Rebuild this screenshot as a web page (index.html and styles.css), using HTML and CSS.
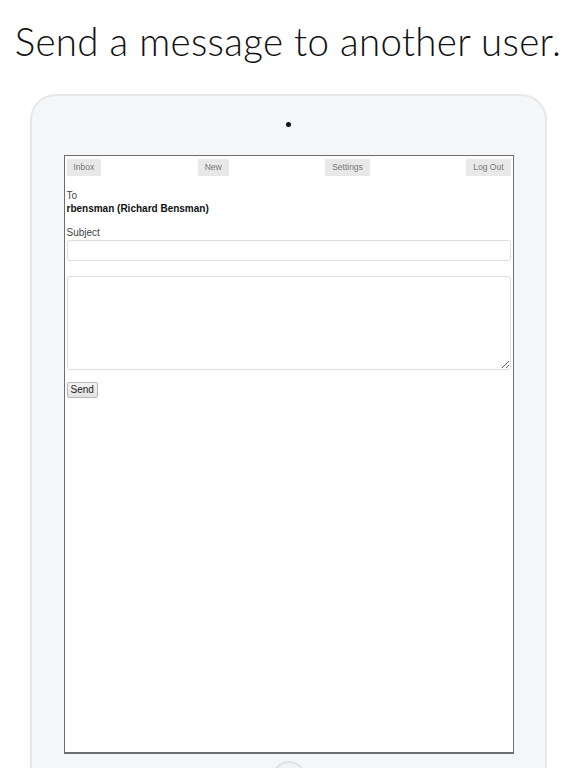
FILE: index.html
```html
<!DOCTYPE html>
<html>
<head>
<meta charset="utf-8">
<link rel="stylesheet" href="styles.css">
</head>
<body>
<h1 class="title">Send a message to another user.</h1>
<div class="device">
  <div class="camera"></div>
  <div class="screen">
    <nav class="nav">
      <span class="nav-btn">Inbox</span>
      <span class="nav-btn">New</span>
      <span class="nav-btn">Settings</span>
      <span class="nav-btn">Log Out</span>
    </nav>
    <form class="form">
      <div class="label">To</div>
      <div class="recipient">rbensman (Richard Bensman)</div>
      <div class="label subject-label">Subject</div>
      <input class="subject" type="text">
      <textarea class="body-text"></textarea>
      <button class="send" type="button">Send</button>
    </form>
  </div>
  <div class="home"></div>
</div>
</body>
</html>
```
FILE: styles.css
```css
html, body {
  margin: 0;
  padding: 0;
  background: #ffffff;
}
body {
  width: 576px;
  height: 768px;
  overflow: hidden;
  font-family: "Liberation Sans", Arial, sans-serif;
}
.title {
  margin: 0;
  padding-top: 18px;
  height: 94px;
  box-sizing: border-box;
  text-align: center;
  font-family: "Lato", "Open Sans", sans-serif;
  font-weight: 300;
  font-size: 38.5px;
  line-height: 46px;
  color: #111111;
  letter-spacing: 0.3px;
}
.device {
  margin-left: 30px;
  width: 517px;
  height: 760px;
  box-sizing: border-box;
  border: 2px solid #e6e7e9;
  border-radius: 26px;
  background: #f5f6f8;
  display: flex;
  flex-direction: column;
  align-items: center;
}
.camera {
  margin-top: 26px;
  width: 5px;
  height: 5px;
  border-radius: 50%;
  background: #111111;
}
.screen {
  margin-top: 28px;
  width: 450px;
  height: 599px;
  box-sizing: border-box;
  border: 1px solid #6e6e6e;
  border-bottom-width: 2px;
  background: #ffffff;
  padding: 3px 2px 0 2px;
}
.nav {
  display: flex;
  justify-content: space-between;
}
.nav-btn {
  height: 17px;
  line-height: 17px;
  padding: 0 7px;
  background: #e8e8e8;
  color: #777777;
  font-size: 8.5px;
}
.form {
  display: flex;
  flex-direction: column;
  align-items: flex-start;
  margin: 0;
}
.label {
  font-size: 10px;
  line-height: 12px;
  color: #444444;
  margin-top: 14px;
}
.recipient {
  font-size: 10px;
  line-height: 12px;
  font-weight: bold;
  color: #111111;
  margin-top: 1px;
}
.subject-label {
  margin-top: 12px;
}
.subject {
  margin: 1px 0 0 0;
  width: 100%;
  height: 21px;
  box-sizing: border-box;
  border: 1px solid #dddddd;
  border-radius: 3px;
  background: #ffffff;
  padding: 0;
}
.body-text {
  margin: 15px 0 0 0;
  width: 100%;
  height: 94px;
  box-sizing: border-box;
  border: 1px solid #dddddd;
  border-radius: 3px;
  background: #ffffff;
  padding: 0;
  resize: vertical;
}
.send {
  margin-top: 12px;
  height: 16px;
  padding: 0 3px;
  font-family: "Liberation Sans", Arial, sans-serif;
  font-size: 10px;
  line-height: 14px;
  color: #222222;
  background: linear-gradient(#f4f4f4, #e2e2e2);
  border: 1px solid #b8b8b8;
  border-radius: 2px;
}
.home {
  margin-top: 7px;
  width: 34px;
  height: 34px;
  box-sizing: border-box;
  border-radius: 50%;
  border: 2px solid #e0e1e3;
  background: #f2f3f5;
}
```
